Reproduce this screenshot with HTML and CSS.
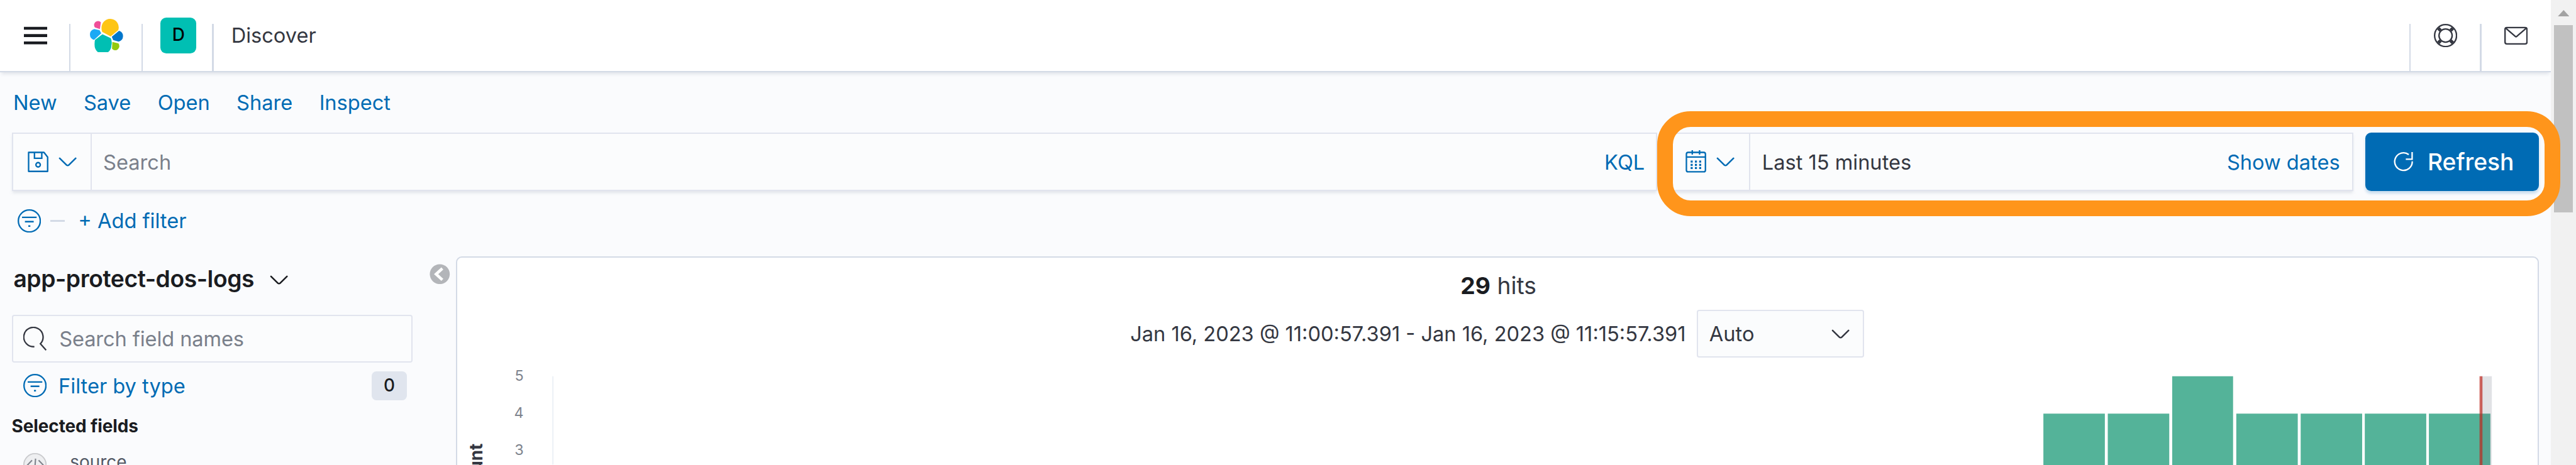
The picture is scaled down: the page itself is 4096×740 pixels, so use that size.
FILE: index.html
```
<!DOCTYPE html>
<html lang="en">
<head>
<meta charset="utf-8">
<title>Discover</title>
<link rel="stylesheet" href="styles.css">
</head>
<body>
<svg class="defs" aria-hidden="true">
  <symbol id="chevron" viewBox="0 0 16 16"><path fill="currentColor" d="M13.069 5.157L8.384 9.768a.546.546 0 01-.768 0L2.93 5.158a.552.552 0 00-.771 0 .53.53 0 000 .759l4.684 4.61c.641.631 1.672.63 2.312 0l4.684-4.61a.53.53 0 000-.76.552.552 0 00-.771 0z"/></symbol>
  <symbol id="filter" viewBox="0 0 16 16"><g fill="none" stroke="currentColor"><circle cx="8" cy="8" r="7.5"/><path d="M3 5.5h10M5 8.5h6M7.3 11.5h1.4"/></g></symbol>
</svg>
<div class="window">
  <div class="page">
    <header class="header">
      <button class="cell first"><svg class="icon" viewBox="0 0 16 16"><path fill="#1a1c21" d="M0 2h16v2H0zM0 7h16v2H0zM0 12h16v2H0z"/></svg></button>
      <i class="sep"></i>
      <a class="cell wide"><svg class="logo" viewBox="69 36 170 170">
        <path fill="#fec514" d="M132 103L175 126L214 94A43 43 0 1 0 131 66Q125 85 132 103z"/>
        <path fill="#00bfb3" d="M95 144L133 115L176 135Q184 155 179 172A43 43 0 0 1 93 172Q92 155 95 144z"/>
        <path fill="#f04e98" d="M125 54L120 88L95 80A19 19 0 0 1 125 54z"/>
        <path fill="#1ba9f5" d="M91 88L118 94L127 110L90 144A29 29 0 0 1 91 88z"/>
        <path fill="#0077cc" d="M218 97L181 128L188 145L216 153A29 29 0 0 0 218 97z"/>
        <path fill="#93c90e" d="M184 154L215 162A19 19 0 0 1 182 189z"/>
      </svg></a>
      <i class="sep"></i>
      <div class="cell space"><span class="avatar">D</span></div>
      <i class="sep"></i>
      <span class="crumb">Discover</span>
      <i class="sep push"></i>
      <button class="cell"><svg class="icon dark" viewBox="0 0 16 16"><g fill="none" stroke="currentColor"><circle cx="8" cy="8" r="7.5"/><circle cx="8" cy="8" r="4.5"/><path stroke-width="2.3" d="M4.6 4.6L3 3M11.4 4.6L13 3M4.6 11.4L3 13M11.4 11.4L13 13"/></g></svg></button>
      <i class="sep"></i>
      <button class="cell"><svg class="icon dark" viewBox="0 0 16 16"><g fill="none" stroke="currentColor"><rect x=".5" y="2.5" width="15" height="11.2" rx="1.2"/><path d="M1 3L7.6 8.6q.4.4.8 0L15 3"/></g></svg></button>
    </header>

    <nav class="menu"><a>New</a><a>Save</a><a>Open</a><a>Share</a><a>Inspect</a></nav>

    <div class="query">
      <div class="box query-box">
        <button class="prepend">
          <svg class="icon" viewBox="0 0 16 16"><g fill="none" stroke="currentColor"><path stroke-linejoin="round" d="M1.5 1.5H12L14.5 4.700V14.500H1.500z"/><path d="M5.500 1.500V5.500H10.500V1.500"/><circle cx="8" cy="10" r="1.5"/></g></svg>
          <svg class="icon"><use href="#chevron"/></svg>
        </button>
        <span class="placeholder">Search</span>
        <a class="kql">KQL</a>
      </div>
      <div class="box date-box">
        <button class="prepend">
          <svg class="icon" viewBox="0 0 16 16"><g fill="none" stroke="currentColor"><rect x="1.500" y="1.500" width="13" height="13.300" rx="1.200"/><path d="M1.500 4.700h13M5.500 0v3M10.500 0v3"/><path stroke-width="1.400" stroke-dasharray="1.400 1.500" d="M4.400 7.800h7.500M4.400 10h7.500M4.400 12.200h7.500"/></g></svg>
          <svg class="icon"><use href="#chevron"/></svg>
        </button>
        <span class="range">Last 15 minutes</span>
        <a class="show">Show dates</a>
      </div>
      <button class="refresh">
        <svg class="icon" viewBox="0 0 16 16"><path fill="none" stroke="currentColor" d="M11.200 3A6 6 0 1 0 13.600 7.600M13.500 1.300V6.200H9.200"/></svg>
        Refresh
      </button>
      <div class="highlight"></div>
    </div>

    <div class="filters">
      <svg class="icon"><use href="#filter"/></svg><i class="dash"></i><a>+ Add filter</a>
    </div>

    <main class="main">
      <aside class="sidebar">
        <h2 class="index">app-protect-dos-logs <svg class="icon"><use href="#chevron"/></svg></h2>
        <div class="field-search">
          <svg class="icon dark" viewBox="0 0 16 16"><path fill="none" stroke="currentColor" d="M7.600 13.600A6.600 6.600 0 1 1 11.700 11.600L15.600 16"/></svg>
          Search field names
        </div>
        <div class="type-filter"><svg class="icon"><use href="#filter"/></svg><a>Filter by type</a><span class="badge">0</span></div>
        <h3 class="selected">Selected fields</h3>
        <div class="field">
          <svg class="icon" viewBox="0 0 16 16"><circle cx="8" cy="8" r="7.600" fill="#eeeff1" stroke="#c9cacd" stroke-width=".8"/><path fill="none" stroke="#7f838c" stroke-width=".9" d="M8.400 3.800L7.800 12M6 4.900L3 8l3 3M10.500 4.900l3 3.100l-3 3"/></svg>
          <span>_source</span>
        </div>
      </aside>
      <button class="collapse"><svg viewBox="0 0 36 36"><circle cx="18" cy="18" r="17.500" fill="#b3b5b9"/><path fill="none" stroke="#fff" stroke-width="5" d="M22.500 8L11.500 18l11 10"/></svg></button>
      <section class="panel">
        <div class="hits"><b>29</b> hits</div>
        <div class="timerange">
          <span>Jan 16, 2023 @ 11:00:57.391 - Jan 16, 2023 @ 11:15:57.391</span>
          <div class="select">Auto <svg class="icon"><use href="#chevron"/></svg></div>
        </div>
        <svg class="chart" viewBox="781 611 3553 184">
          <g class="ticks"><text x="894" y="652">5</text><text x="894" y="715">4</text><text x="894" y="779">3</text></g>
          <text class="axis-title" transform="translate(823.500 759) rotate(-90)">Count</text>
          <path d="M944 644V795" stroke="#eef2f7" stroke-width="2.500"/>
          <path fill="#54b399" d="M3490 708h105v90h-105zM3600 708h105v90h-105zM3710 644h104v154h-104zM3819.500 708h105v90h-105zM3929.500 708h105v90h-105zM4039 708h105v90h-105zM4148.500 708h105v90h-105z"/>
          <path fill="#69707d" fill-opacity=".2" d="M4237 644h19v154h-19z"/>
          <path fill="#bd271e" fill-opacity=".7" d="M4235 644h5v154h-5z"/>
        </svg>
      </section>
    </main>
  </div>
  <div class="scrollbar">
    <svg class="arrow" viewBox="0 0 20 11"><path fill="#a3a3a3" d="M10 0L20 11H0z"/></svg>
    <div class="thumb"></div>
  </div>
</div>
</body>
</html>
```
FILE: styles.css
```
* { box-sizing: border-box; }
html { font-size: 9.309px; }
body {
  margin: 0;
  height: 740px;
  overflow: hidden;
  font-family: Inter, "Liberation Sans", sans-serif;
  font-size: 3.5rem;
  line-height: 1;
  color: #343741;
  background: #fafbfd;
}
button {
  font: inherit;
  color: inherit;
  background: none;
  border: 0;
  padding: 0;
}
a { color: #006bb4; }
.defs { display: none; }
.icon { width: 4rem; height: 4rem; flex: none; display: block; }
.dark { color: #343741; }

.window { display: flex; width: 4096px; height: 740px; overflow: hidden; }
.page { width: 435.7rem; flex: none; display: flex; flex-direction: column; }

.header {
  height: 12.4rem;
  flex: none;
  display: flex;
  align-items: center;
  background: #fff;
  border-bottom: .3rem solid #d3dae6;
  box-shadow: 0 .5rem .6rem -.2rem rgba(152, 162, 179, .3);
}
.cell {
  width: 11.83rem;
  display: flex;
  align-items: center;
  justify-content: center;
}
.first { padding-left: .25rem; }
.wide { width: 12.09rem; padding-left: .1rem; }
.space { padding-left: .3rem; }
.sep { width: .25rem; height: 8.1rem; align-self: flex-end; background: #d3dae6; }
.push { margin-left: auto; }
.logo { width: 5.67rem; height: 5.67rem; }
.avatar {
  width: 6.1rem;
  height: 6.1rem;
  border-radius: 1rem;
  background: #00bfb3;
  color: #000;
  font-size: 3rem;
  font-weight: 500;
  line-height: 5.9rem;
  text-align: center;
}
.crumb { padding-left: 3rem; }

.menu {
  height: 10.3rem;
  flex: none;
  display: flex;
  align-items: center;
  gap: 4.55rem;
  padding-left: 2.25rem;
}

.query { position: relative; height: 10rem; flex: none; display: flex; padding-left: 2rem; }
.box {
  display: flex;
  align-items: center;
  background: #fbfcfd;
  border: .25rem solid #e1e4ee;
  box-shadow: 0 .4rem .5rem -.1rem rgba(152, 162, 179, .25);
}
.query-box { width: 281.1rem; margin-right: 1rem; }
.date-box { width: 117.9rem; margin-right: 2rem; }
.prepend {
  height: 100%;
  display: flex;
  align-items: center;
  gap: 1rem;
  padding: 0 2rem 0 2.3rem;
  color: #006bb4;
  border-right: .25rem solid #e1e4ee;
}
.date-box .prepend { padding: 0 2rem 0 3.4rem; }
.placeholder { padding-left: 1.9rem; color: #7a808b; }
.range { padding-left: 2.05rem; }
.kql { margin-left: auto; padding-right: 1.95rem; }
.show { margin-left: auto; padding-right: 2.1rem; }
.refresh {
  width: 29.7rem;
  display: flex;
  align-items: center;
  gap: 2.05rem;
  padding-left: 4.6rem;
  background: #006bb4;
  color: #fff;
  border-radius: 1rem;
  font-size: 4rem;
  font-weight: 500;
  line-height: 9.8rem;
  box-shadow: 0 .5rem .5rem -.1rem rgba(0, 107, 180, .2);
}
.highlight {
  position: absolute;
  left: 283.05rem;
  top: -3.7rem;
  width: 154.3rem;
  height: 17.95rem;
  border: 2.7rem solid #ff951b;
  border-radius: 5.7rem;
}

.filters {
  height: 10.1rem;
  flex: none;
  display: flex;
  align-items: center;
  padding-left: 3rem;
  color: #006bb4;
}
.dash { width: 2.5rem; height: .25rem; margin: 0 2.25rem 0 1.6rem; background: #d3dae6; }

.main { flex: 1; min-height: 0; display: flex; padding-top: 1rem; }
.sidebar { width: 72.5rem; padding-left: 2rem; flex: none; }
.index {
  height: 10.05rem;
  margin: 0;
  padding: 0 0 2.3rem .3rem;
  display: flex;
  align-items: center;
  gap: 2.2rem;
  font-size: 4rem;
  font-weight: 600;
  letter-spacing: -.045rem;
  color: #1a1c21;
}
.index .icon { margin-top: .4rem; }
.field-search {
  width: 68.5rem;
  height: 8.1rem;
  display: flex;
  align-items: center;
  gap: 2.1rem;
  padding-left: 1.8rem;
  background: #fbfcfd;
  border: .25rem solid #e1e4ee;
  border-radius: .4rem;
  color: #7a808b;
  letter-spacing: -.01rem;
}
.type-filter {
  height: 8rem;
  display: flex;
  align-items: center;
  padding-left: 2rem;
  width: 67.5rem;
  color: #006bb4;
}
.type-filter a { padding-left: 2rem; }
.badge {
  margin-left: auto;
  width: 6rem;
  height: 5rem;
  border-radius: .8rem;
  background: #e0e5ee;
  color: #1a1c21;
  font-size: 3rem;
  font-weight: 500;
  line-height: 4.9rem;
  text-align: center;
}
.selected {
  margin: 0;
  height: 5.8rem;
  line-height: 5.9rem;
  font-size: 3rem;
  font-weight: 700;
  letter-spacing: -.01rem;
  color: #1a1c21;
}
.field {
  display: flex;
  gap: .6rem;
  padding: 1.75rem 0 0 2rem;
  font-size: 3rem;
  color: #535966;
}
.field span { padding: .1rem 0 0 2rem; }

.collapse { width: 3.5rem; height: 3.5rem; margin: 1.3rem 1.8rem 0 .9rem; flex: none; }
.collapse svg { display: block; width: 100%; height: 100%; }

.panel {
  flex: none;
  width: 355.8rem;
  height: 40rem;
  margin-left: -.85rem;
  background: #fff;
  border: .25rem solid #d3dae6;
  border-radius: 1rem;
}
.hits {
  height: 9.05rem;
  line-height: 9.6rem;
  font-size: 4rem;
  padding-left: .4rem;
  text-align: center;
}
.hits b { font-weight: 700; color: #1a1c21; }
.timerange { height: 8rem; display: flex; align-items: center; justify-content: center; gap: 1.9rem; white-space: nowrap; }
.select {
  width: 28.6rem;
  height: 8.1rem;
  padding: 0 1.8rem 0 1.9rem;
  display: flex;
  align-items: center;
  justify-content: space-between;
  background: #fbfcfd;
  border: .25rem solid #e1e4ee;
  border-radius: .4rem;
}
.chart { display: block; width: 100%; height: 18.4rem; }
.ticks text { font-size: 25px; fill: #7d838d; text-anchor: end; }
.axis-title { font-size: 30px; font-weight: 700; fill: #343741; text-anchor: end; }

.scrollbar {
  flex: 1;
  display: flex;
  flex-direction: column;
  align-items: center;
  background: #f1f1f1;
}
.arrow { width: 2rem; height: 1.1rem; margin: 1.7rem 0 1.5rem; }
.thumb { width: 3.3rem; height: 32rem; background: #c1c1c1; }
```
